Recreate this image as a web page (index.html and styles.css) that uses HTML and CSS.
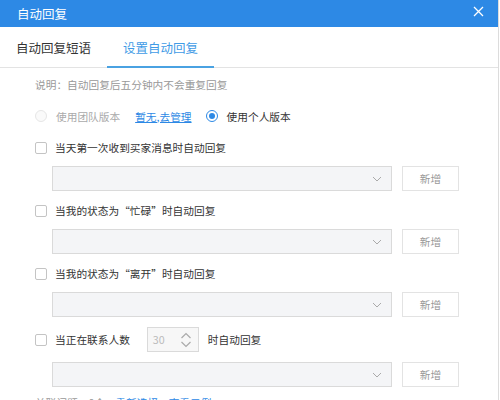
FILE: index.html
```html
<!DOCTYPE html>
<html lang="zh">
<head>
<meta charset="utf-8">
<link rel="stylesheet" href="styles.css">
</head>
<body>
<div class="dialog">
  <div class="header">
    <span class="title">自动回复</span>
    <svg class="close" width="11" height="11" viewBox="0 0 11 11"><path d="M1 1L10 10M10 1L1 10" stroke="#fff" stroke-width="1.3" fill="none"/></svg>
  </div>
  <div class="tabs">
    <div class="tab">自动回复短语</div>
    <div class="tab active">设置自动回复</div>
  </div>
  <div class="content">
    <div class="desc">说明：自动回复后五分钟内不会重复回复</div>
    <div class="radio-row">
      <span class="radio disabled"></span>
      <span class="radio-text muted">使用团队版本</span>
      <a class="link under">暂无,去管理</a>
      <span class="radio checked"></span>
      <span class="radio-text">使用个人版本</span>
    </div>

    <div class="group">
      <div class="label-row"><span class="cb"></span><span>当天第一次收到买家消息时自动回复</span></div>
      <div class="select-row">
        <div class="select"><svg class="chev" width="10" height="6" viewBox="0 0 10 6"><path d="M1 1L5 5L9 1" stroke="#aaa" fill="none"/></svg></div>
        <div class="btn">新增</div>
      </div>
    </div>

    <div class="group">
      <div class="label-row"><span class="cb"></span><span>当我的状态为“忙碌”时自动回复</span></div>
      <div class="select-row">
        <div class="select"><svg class="chev" width="10" height="6" viewBox="0 0 10 6"><path d="M1 1L5 5L9 1" stroke="#aaa" fill="none"/></svg></div>
        <div class="btn">新增</div>
      </div>
    </div>

    <div class="group">
      <div class="label-row"><span class="cb"></span><span>当我的状态为“离开”时自动回复</span></div>
      <div class="select-row">
        <div class="select"><svg class="chev" width="10" height="6" viewBox="0 0 10 6"><path d="M1 1L5 5L9 1" stroke="#aaa" fill="none"/></svg></div>
        <div class="btn">新增</div>
      </div>
    </div>

    <div class="group g4">
      <div class="label-row tall"><span class="cb"></span><span>当正在联系人数</span>
        <div class="num"><span class="num-val">30</span>
          <svg class="spin" width="12" height="16" viewBox="0 0 12 16"><path d="M1.5 6L6 1.5L10.5 6M1.5 10L6 14.5L10.5 10" stroke="#aaa" stroke-width="1.2" fill="none"/></svg>
        </div>
        <span class="after">时自动回复</span>
      </div>
      <div class="select-row">
        <div class="select"><svg class="chev" width="10" height="6" viewBox="0 0 10 6"><path d="M1 1L5 5L9 1" stroke="#aaa" fill="none"/></svg></div>
        <div class="btn">新增</div>
      </div>
    </div>

    <div class="footer-line">
      <span class="muted2">关联问题：0个</span>
      <a class="link">重新选择</a>
      <a class="link">查看示例</a>
    </div>
  </div>
</div>
</body>
</html>
```

FILE: styles.css
```css
* { box-sizing: border-box; }
html, body { margin: 0; padding: 0; background: #fff; overflow: hidden; }
body {
  font-family: "Microsoft YaHei", "Noto Sans CJK SC", "Noto Sans", sans-serif;
  color: #333;
  width: 500px;
  height: 400px;
}
.dialog {
  width: 499px;
  height: 400px;
  border-right: 1px solid #dcdcdc;
  overflow: hidden;
}
.header {
  height: 27px;
  background: #2d89e5;
  display: flex;
  align-items: center;
  justify-content: space-between;
  padding: 0 14px 0 17px;
}
.title { color: #fff; font-size: 12.5px; line-height: 27px; }
.close { margin-top: -5px; }
.tabs {
  height: 41px;
  display: flex;
  border-bottom: 1px solid #e3e3e3;
}
.tab {
  padding: 0 16px;
  font-size: 12.5px;
  line-height: 41px;
  color: #333;
  height: 40px;
}
.tab.active {
  color: #3f9be6;
  border-bottom: 2px solid #4aa2e2;
  height: 41px;
}
.content { padding-left: 35px; font-size: 10.7px; }
.desc { color: #999; line-height: 20px; margin-top: 7px; }
.radio-row {
  display: flex;
  align-items: center;
  height: 20px;
  margin-top: 11px;
}
.radio {
  width: 12px; height: 12px;
  border-radius: 50%;
  border: 1px solid #ccc;
  display: inline-block;
  position: relative;
}
.radio.disabled { border-color: #e6e6e6; background: #fafafa; }
.radio.checked { border-color: #2d89e5; margin-left: 14px; }
.radio.checked::after {
  content: "";
  position: absolute;
  left: 2px; top: 2px;
  width: 6px; height: 6px;
  border-radius: 50%;
  background: #2d89e5;
}
.radio-text { margin-left: 9px; }
.muted { color: #aaa; }
.link { color: #2d89e5; margin-left: 15px; }
.link.under { text-decoration: underline; }
.group { margin-top: 12px; }
.label-row {
  display: flex;
  align-items: center;
  height: 20px;
  line-height: 20px;
}
.label-row.tall { height: 25px; }
.cb {
  width: 12px; height: 12px;
  border: 1px solid #c4c4c4;
  border-radius: 2px;
  background: #fff;
  margin-right: 8px;
  flex: none;
}
.select-row {
  display: flex;
  margin-top: 8px;
  margin-left: 17px;
  height: 25px;
}
.select {
  width: 340px;
  height: 25px;
  background: #f4f5f7;
  border: 1px solid #dadada;
  display: flex;
  align-items: center;
  justify-content: flex-end;
  padding-right: 9px;
}
.btn {
  width: 57px;
  height: 25px;
  margin-left: 10px;
  border: 1px solid #e3e3e3;
  color: #999;
  text-align: center;
  line-height: 23px;
  background: #fff;
}
.group + .group { margin-top: 10px; }
.group.g4 { margin-top: 10px; }
.g4 .select-row { margin-top: 10px; }
.num {
  width: 52px;
  height: 25px;
  border: 1px solid #dadada;
  background: #f7f7f7;
  margin-left: 17px;
  display: flex;
  align-items: center;
  justify-content: space-between;
  padding: 0 6px 0 5px;
}
.num-val { color: #bbb; }
.after { margin-left: 9px; }
.footer-line { margin-top: 6px; line-height: 20px; }
.muted2 { color: #999; }
.footer-line .link { margin-left: 8px; }
```
